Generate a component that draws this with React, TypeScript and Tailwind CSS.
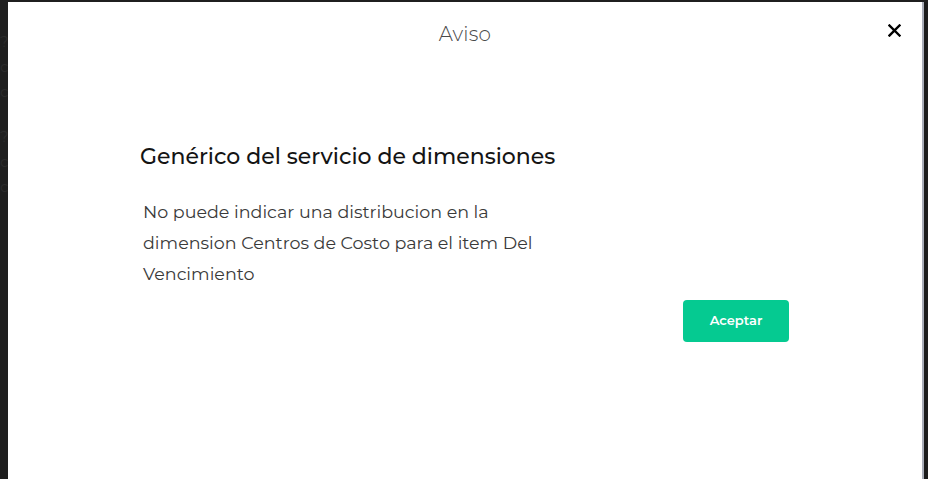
export default function App() {
  return (
    <div className="flex h-[479px] w-[928px] overflow-hidden bg-[#1f1f1f] pt-[2px] font-['Montserrat','Open_Sans','Noto_Sans',sans-serif]">
      <div className="flex w-[8px] flex-col gap-[17px] overflow-hidden pt-[36px] text-[15px] leading-[8px] text-[#2c2c2c]">
        <span>?</span>
        <span>c</span>
        <span>c</span>
        <span className="mt-[20px]">?</span>
        <span>c</span>
        <span>c</span>
      </div>
      <div className="relative flex w-[914px] flex-col bg-white">
        <div className="flex h-[66px] items-center justify-center pb-[2px]">
          <h2 className="text-[20px] font-light tracking-[0.2px] text-[#4a4a4a]">Aviso</h2>
        </div>
        <button className="absolute right-[19px] top-[19px] flex h-[18px] w-[18px] items-center justify-center text-black">
          <svg width="13" height="13" viewBox="0 0 13 13" fill="none">
            <path d="M1.5 1.5L11.5 11.5M11.5 1.5L1.5 11.5" stroke="currentColor" strokeWidth="2.4" strokeLinecap="square" />
          </svg>
        </button>
        <div className="pl-[132px] pr-[133px] pt-[74px]">
          <h3 className="text-[22px] font-medium leading-[30px] text-[#141414]">
            Genérico del servicio de dimensiones
          </h3>
          <p className="mt-[24px] w-[400px] pl-[3px] text-[17.5px] leading-[31px] text-[#3a3a3a]">
            No puede indicar una distribucion en la dimension Centros de Costo para el item Del Vencimiento
          </p>
          <div className="mt-[11px] flex justify-end">
            <button className="h-[42px] w-[106px] rounded-[4px] bg-[#05ca91] text-[13px] font-semibold text-white">
              Aceptar
            </button>
          </div>
        </div>
      </div>
      <div className="w-[2px] bg-[#a9adb8]" />
      <div className="flex-1 bg-[#1c1c1c]" />
    </div>
  )
}
